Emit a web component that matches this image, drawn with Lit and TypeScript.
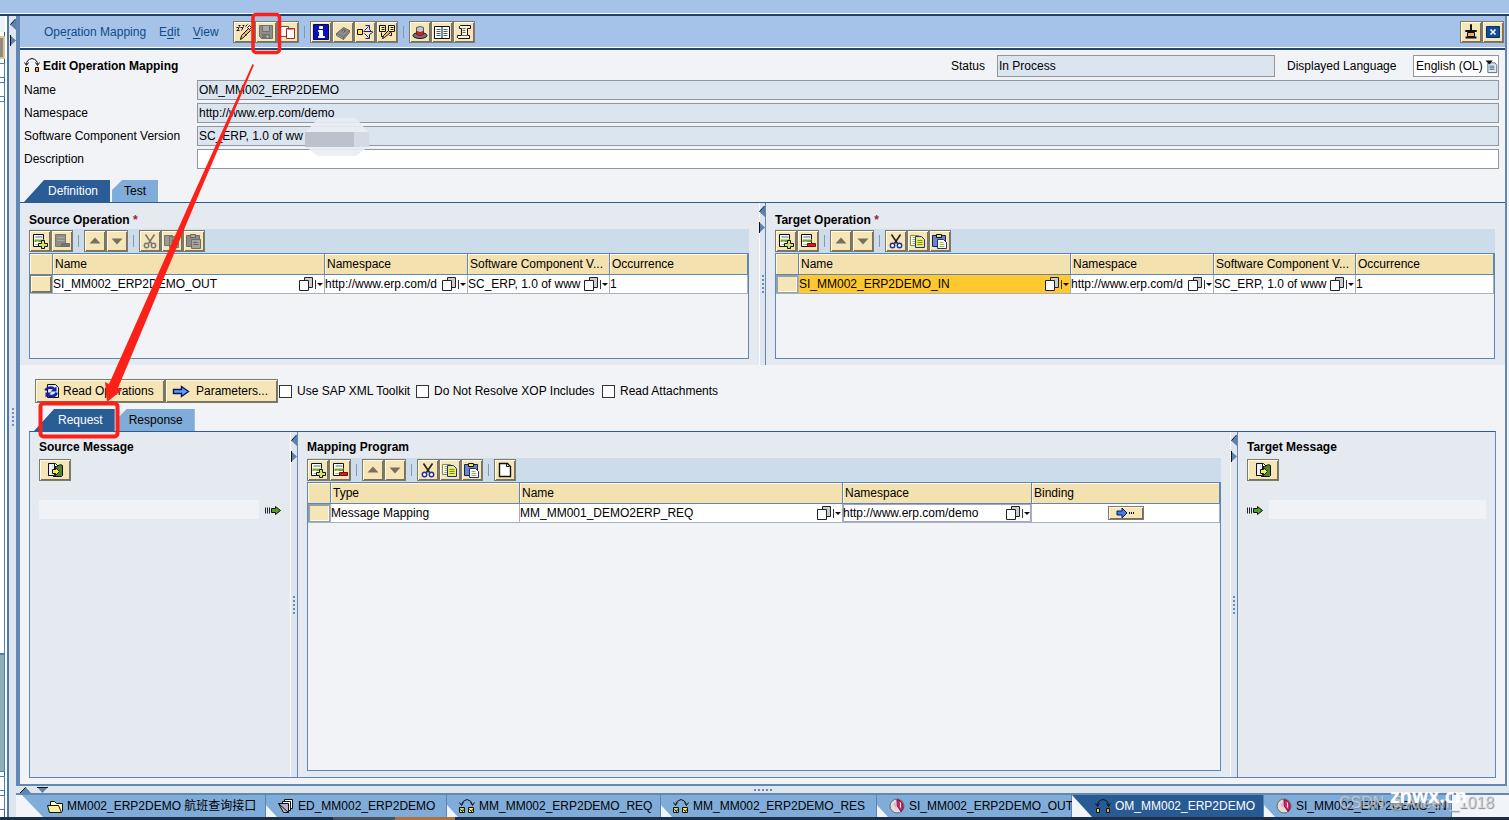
import { LitElement, html, css, svg, nothing } from "lit";
import { customElement, property, state } from "lit/decorators.js";
import { classMap } from "lit/directives/class-map.js";

/* ---------- icons, all drawn on a 16 x 16 grid ---------- */
const list = svg`
  <path d="M1 1h10v12H1z" fill="#fff" stroke="#111"/>
  <path d="M3 3h7M3 4h7M3 11h4" stroke="#9db4c8"/><path d="M2 7h9M2 8h9" stroke="#7da035"/><path d="M2 6h9M4 8h2" stroke="#c9d86a"/>`;

const ICONS: Record<string, unknown> = {
  edit: svg`<path d="M0 3h2M2 1h2M4 3h2M6 1h2M1 6l2-4M5 6l2-4M0 6h3M9 2l2-2" fill="none" stroke="#111"/>
    <path d="M12 4l2 2-7 7-3 2 1-4z" fill="#f2c04a" stroke="#111"/><path d="M11 3l2-2 2 2-2 2z" fill="#fff" stroke="#111"/><path d="M8 9l2 2" stroke="#c23a22"/>`,
  save: svg`<path d="M1 1h13v13H3l-2-2z" fill="#8f8f8c" stroke="#6f6f6d"/><path d="M4 1h7v6H4z" fill="#a9a9a6" stroke="#6f6f6d"/><path d="M4 10h7v4H4z" fill="#777" stroke="#6f6f6d"/><path d="M9 11v2" stroke="#c4c4c0" stroke-width="2"/>`,
  copyobj: svg`<path d="M0 2h8v10H0z" fill="#fff" stroke="#555"/><path d="M6 4h8v10H6z" fill="#fff" stroke="#b3271c"/><path d="M7 5h6" stroke="#d98a80"/>`,
  info: svg`<path d="M0 0h15v15H0z" fill="#0a12b8" stroke="#050a60"/><path d="M6 2h3v2H6zM5 6h4v6h2v1H5v-1h1V7H5z" fill="#fff" stroke="#fff"/>`,
  book: svg`<path d="M1 9l7-6 6 3-6 7z" fill="#8d8d89" stroke="#6a6a68"/><path d="M1 9l7 4v2l-7-4zM8 13l6-7v2l-6 7z" fill="#aaa" stroke="#6a6a68"/><path d="M6 7l2-2 2 1-2 2" fill="none" stroke="#555"/>`,
  tree: svg`<path d="M0 5h5v5H0z" fill="#f6ea4e" stroke="#111"/><path d="M6 7h9M12 5l3 3-3 2M7 6l4-4M8 1h4v4M7 9l4 4M12 10v4H8" fill="none" stroke="#13208f"/>`,
  tools: svg`<path d="M0 1h6v6H0zM9 1h6v6H9z" fill="#fff9a0" stroke="#111"/><path d="M2 3h3M2 5h3M11 3h3M11 5h3M2 8v4h2M12 8v3h-2" stroke="#111" fill="none"/><path d="M9 6l2 2-6 5-2 1 1-3z" fill="#f2c04a" stroke="#111"/>`,
  hat: svg`<ellipse cx="7.500" cy="11" rx="7" ry="3" fill="#6c7484" stroke="#111"/><path d="M4 10V3q4-2 7 0v7q-4 2-7 0z" fill="#c3c9d4" stroke="#555"/><path d="M4 7q4 2 7 0v3q-4 2-7 0z" fill="#d8232a" stroke="#8d1418"/>`,
  book2: svg`<path d="M0 2h15v12H0z" fill="#fff" stroke="#111"/><path d="M7.500 2v12" stroke="#111"/><path d="M2 5h4M2 7h4M2 9h4M2 11h4M9 5h4M9 7h4M9 9h4M9 11h4" stroke="#3a5f9b"/>`,
  scroll: svg`<path d="M4 1h10v3h-3v7h2v3H2q-2-1-1-3h4V4H3q-1-2 1-3z" fill="#fff6d8" stroke="#111"/><path d="M6 4h3M6 6h3M6 8h3M5 11h6" stroke="#666"/>`,
  pin: svg`<path d="M7 0h1v6H7z" fill="#fff" stroke="#111"/><path d="M2 6h11v1H2z" fill="#fff" stroke="#111"/><path d="M4 8h7v4H4z" fill="#f0a95e" stroke="#111"/><path d="M2 13h11" stroke="#111" stroke-width="2"/>`,
  close: svg`<path d="M1 2h13v11H1z" fill="#0f4c97" stroke="#0a2f6b"/><path d="M5 5l5 5M10 5l-5 5" stroke="#fff" stroke-width="1.600"/>`,
  add: svg`${list}<path d="M9 7h3v3h3v3h-3v2H9v-2H6v-3h3z" fill="#cfe56b" stroke="#111"/>`,
  remove: svg`${list}<path d="M7 10h8v3H7z" fill="#e01b12" stroke="#7a0d08"/>`,
  removeoff: svg`<path d="M1 1h10v12H1z" fill="#8f8f88" stroke="#77776f"/><path d="M3 4h7M3 7h7" stroke="#aaa"/><path d="M7 10h8v3H7z" fill="#777" stroke="#6c6c66"/>`,
  up: svg`<path d="M2 10h11L7.500 4z" fill="#77705f"/>`,
  down: svg`<path d="M2 5h11l-5.500 6z" fill="#77705f"/>`,
  cut: svg`<path d="M3 1l6 9M12 1L6 10" stroke="#222" stroke-width="1.600"/><circle cx="4" cy="12" r="2.200" fill="#fff" stroke="#1b2aa5" stroke-width="1.400"/><circle cx="11" cy="12" r="2.200" fill="#fff" stroke="#1b2aa5" stroke-width="1.400"/>`,
  cutoff: svg`<path d="M3 1l6 9M12 1L6 10" stroke="#777" stroke-width="1.600"/><circle cx="4" cy="12" r="2.200" fill="none" stroke="#777" stroke-width="1.400"/><circle cx="11" cy="12" r="2.200" fill="none" stroke="#777" stroke-width="1.400"/>`,
  copy: svg`<path d="M0 2h8v10H0z" fill="#fff" stroke="#8a8a50"/><path d="M2 4h3M2 6h3M2 8h3M2 10h3" stroke="#9bb32e"/><path d="M5 3h6l3 3v8H5z" fill="#e7ee6a" stroke="#1b2aa5"/><path d="M7 7h5M7 9h5M7 11h5" stroke="#7d8a1e"/>`,
  copyoff: svg`<path d="M0 2h8v10H0zM5 3h9v11H5z" fill="#9c9a90" stroke="#77756c"/><path d="M7 7h5M7 9h5M7 11h5" stroke="#6c6a62"/>`,
  paste: svg`<path d="M0 2h13v11H0z" fill="#6e86b8" stroke="#16225e"/><path d="M4 1h5v3H4z" fill="#f5ec3f" stroke="#111"/><path d="M5 6h6l3 3v6H5z" fill="#fff" stroke="#1b2aa5"/><path d="M7 9h4M7 11h5M7 13h5" stroke="#9bb32e"/>`,
  pasteoff: svg`<path d="M0 2h13v11H0z" fill="#8d8b82" stroke="#6f6d66"/><path d="M4 1h5v3H4z" fill="#aaa" stroke="#666"/><path d="M5 6h9v9H5z" fill="#a5a39a" stroke="#6f6d66"/><path d="M7 9h4M7 11h5" stroke="#666"/>`,
  page: svg`<path d="M2 1h8l3 3v10H2z" fill="#fff" stroke="#111" stroke-width="1.400"/><path d="M9 1v3h3" fill="none" stroke="#111"/>`,
  refresh: svg`<path d="M4 1h8l3 3v10H4z" fill="#dce9f7" stroke="#111"/><path d="M2 7a5 4 0 019-1M13 9a5 4 0 01-9 2" fill="none" stroke="#1620a0" stroke-width="2.600"/><path d="M13 3v5H7zM2 14V9h6z" fill="#1620a0"/>`,
  arrow: svg`<path d="M0 6h8V3l7 5-7 5v-3H0z" fill="#58a4ea" stroke="#0a1270" stroke-width="1.400"/>`,
  open: svg`<path d="M1 1h7l3 3v9H1z" fill="#f5f8fb" stroke="#111"/><path d="M9 4l4-2 2 1v10l-1 1H6V4z" fill="#4f8a1c" stroke="#111"/><path d="M1 1h6v12H1z" fill="#e8eff6" stroke="#111"/><path d="M5 7h3V5l4 4-4 4v-2H5z" fill="#f7ee3c" stroke="#111"/>`,
  flow: svg`<path d="M0 5v6M2 5v6M4 5v6" stroke="#222"/><path d="M6 6h4V4l5 4-5 4v-2H6z" fill="#4fa022" stroke="#111"/>`,
  op: svg`<path d="M2 7q0-5 5.500-6 5.500 1 5.500 6M0 5l2 3 2-3M11 5l2 3 2-3" fill="none" stroke="#111"/><path d="M1 10h3v4H1z" fill="#e6dc7a" stroke="#111"/><path d="M11 10h3v4h-3z" fill="#f2a445" stroke="#111"/>`,
  mm: svg`<path d="M2 6q1-4 5.500-5 4.500 1 5.500 5M0 4l2 3 2-3M11 4l2 3 2-3" fill="none" stroke="#111"/><path d="M0 9h5v5H0z" fill="#bcd873" stroke="#111"/><path d="M9 9h5v5H9z" fill="#f4ee32" stroke="#111"/><path d="M1 11l2 2 1-2M10 11l2 2 1-2" fill="none" stroke="#111"/>`,
  folder: svg`<path d="M3 13V3h4l2 2h6v8" fill="#fff8c0" stroke="#111"/><path d="M0 7h11l3 7H2z" fill="#fdf09a" stroke="#111"/>`,
  doc: svg`<path d="M6 1h8v9H6z" fill="#fff" stroke="#111"/><path d="M4 3h8v9H4z" fill="#fff" stroke="#111"/><path d="M0 5h10v9H5z" fill="#b4b0c6" stroke="#111"/><path d="M0 5l10 9" stroke="#111"/>`,
  si: svg`<circle cx="7.500" cy="7.500" r="7" fill="#ddd" stroke="#666"/><path d="M7.500 1a7 7 0 014 12l-4-6z" fill="#d62a6a" stroke="#7a1038"/><path d="M7 3L4 6l3 4z" fill="#f5a3c0"/><path d="M11 4v5" stroke="#fff"/>`,
  drop: svg`<path d="M3 3h9l2 3v9H3z" fill="#dfeaf2" stroke="#36566e"/><path d="M5 7h6M5 9h6M5 11h6" stroke="#36566e"/><path d="M0 0h9L5 5z" fill="#111"/>`,
};

const icon = (name: string, size = 16) => html`<svg
  width=${size}
  height=${size}
  viewBox="-0.5 -0.5 16 16"
  fill="none"
  overflow="visible"
  aria-hidden="true"
>
  ${ICONS[name]}
</svg>`;

const base = css`
  * {
    box-sizing: border-box;
  }
  :host {
    font: 12px/18px "Liberation Sans", Arial, "Noto Sans CJK SC", sans-serif;
    color: #000;
  }
  svg {
    display: block;
    flex: none;
  }
  button,
  input,
  select {
    font: inherit;
    color: inherit;
    margin: 0;
    padding: 0;
    border: 0;
    background: none;
    border-radius: 0;
    outline: 0;
  }
  .btn {
    display: inline-flex;
    align-items: center;
    justify-content: center;
    background: #f5e5b7;
    border: 1px solid #7d7a6c;
    box-shadow:
      inset 1px 1px #fffbe6,
      inset -1px -1px #77715d;
  }
`;

/* ---------- a row of square tool buttons; "|" starts a new group ---------- */
@customElement("tool-strip")
export class ToolStrip extends LitElement {
  @property() items = "";
  static styles = [
    base,
    css`
      :host {
        display: flex;
        align-items: center;
      }
      .btn {
        width: 22px;
        height: 22px;
      }
      .sep {
        width: 1px;
        height: 12px;
        margin: 0 5px;
        background: #8898a8;
      }
    `,
  ];
  render() {
    return this.items
      .split(" ")
      .map((n) =>
        n === "|"
          ? html`<span class="sep"></span>`
          : html`<button class="btn" aria-label=${n} ?disabled=${n.endsWith("off") || n === "save"}>${icon(n)}</button>`
      );
  }
}

@customElement("pane-divider")
export class PaneDivider extends LitElement {
  static styles = [
    base,
    css`
      :host {
        display: flex;
        flex-direction: column;
        align-items: center;
        justify-content: center;
        position: relative;
        background: #e0e5ed;
        border-left: 1px solid #fbfcfe;
        border-right: 1px solid #5f87b3;
      }
      .arrows {
        position: absolute;
        top: 3px;
        right: 0;
      }
      .dots {
        width: 2px;
        height: 18px;
        background: repeating-linear-gradient(#6d8fb8 0 2px, transparent 2px 4px);
      }
    `,
  ];
  render() {
    return html`<svg class="arrows" width="6" height="28" viewBox="0 0 6 28">
        <path d="M6 0v11L0 5.500z" fill="#5b82aa" /><path d="M5.500 0L.5 5.500" stroke="#111" />
        <path d="M0 16v11l6-5.500z" fill="#5b82aa" /><path d="M.5 16v11" stroke="#111" />
      </svg>
      <span class="dots"></span>`;
  }
}

interface Column {
  label: string;
  width?: number;
}
interface Cell {
  text?: string;
  kind?: "pick" | "plain" | "button";
  tone?: "hot" | "focus";
}

/* ---------- data grid ---------- */
@customElement("data-grid")
export class DataGrid extends LitElement {
  @property({ attribute: false }) columns: Column[] = [];
  @property({ attribute: false }) row: Cell[] = [];
  @property({ type: Boolean }) pressed = false;
  static styles = [
    base,
    css`
      :host {
        display: block;
        background: #f1f3f7;
        border: 1px solid #5f87b3;
      }
      table {
        width: 100%;
        table-layout: fixed;
        border-collapse: separate;
        border-spacing: 0;
      }
      col.sel {
        width: 23px;
      }
      th {
        height: 21px;
        padding: 0 2px;
        white-space: nowrap;
        text-align: left;
        font-weight: normal;
        line-height: 18px;
        background: #f3e1b0;
        border-right: 1px solid #5f87b3;
        border-bottom: 1px solid #5f87b3;
        box-shadow: inset 1px 1px #fdf7e2;
      }
      td {
        height: 19px;
        padding: 0;
        background: #fff;
        border-right: 1px solid #a9b1bb;
        border-bottom: 1px solid #a9b1bb;
      }
      td.hot {
        background: #ffc82f;
      }
      td.focus {
        box-shadow: inset 0 0 0 1px #a3a3cf;
      }
      .cell {
        display: flex;
        align-items: center;
        justify-content: center;
        height: 18px;
      }
      input {
        flex: 1;
        min-width: 0;
        height: 18px;
        padding: 0 1px 0 0;
      }
      .pick {
        width: 25px;
        height: 16px;
      }
      .rowsel {
        display: block;
        width: 100%;
        height: 18px;
      }
      .rowsel.in {
        border-color: #8fa0b0;
        box-shadow:
          inset 1px 1px #8fa0b0,
          inset -1px -1px #fffbe6;
      }
      .detail {
        width: 36px;
        height: 14px;
      }
    `,
  ];
  private cell(c: Cell, i: number) {
    if (c.kind === "button")
      return html`<button class="btn detail" aria-label="Binding">
        <svg width="20" height="12" viewBox="0 0 20 12">
          <path d="M1 4h5V1l5 5-5 5V8H1z" fill="#3f7fe0" stroke="#0a1270" />
          <path d="M13 6h1M15 6h1M17 6h1" stroke="#111" stroke-width="2" />
        </svg>
      </button>`;
    return html`<input aria-label=${this.columns[i].label} .value=${c.text ?? ""} />${c.kind === "pick"
        ? html`<button class="pick" aria-label="Search">
            <svg width="24" height="15" viewBox="0 0 24 15">
              <path d="M5.500.5h8v10h-8z" fill="#c9ced6" stroke="#222" />
              <path d="M.5 3.500h9v10h-9z" fill="#fff" stroke="#222" />
              <path d="M16.500 3v9" stroke="#333" /><path d="M18 6h6l-3 3z" fill="#111" />
            </svg>
          </button>`
        : nothing}`;
  }
  render() {
    return html`<table>
      <colgroup>
        <col class="sel" />
        ${this.columns.map((c) => html`<col width=${c.width ?? nothing} />`)}
      </colgroup>
      <thead>
        <tr>
          <th></th>
          ${this.columns.map((c) => html`<th scope="col">${c.label}</th>`)}
        </tr>
      </thead>
      <tbody>
        <tr>
          <td><button class=${classMap({ btn: true, rowsel: true, in: this.pressed })} aria-label="Row"></button></td>
          ${this.row.map((c, i) => html`<td class=${c.tone ?? ""}><div class="cell">${this.cell(c, i)}</div></td>`)}
        </tr>
      </tbody>
    </table>`;
  }
}

const OPERATION_COLUMNS: Column[] = [
  { label: "Name" },
  { label: "Namespace", width: 143 },
  { label: "Software Component V...", width: 142 },
  { label: "Occurrence", width: 138 },
];
const operationRow = (name: string, hot = false): Cell[] => [
  { text: name, kind: "pick", tone: hot ? "hot" : undefined },
  { text: "http://www.erp.com/d", kind: "pick" },
  { text: "SC_ERP, 1.0 of www", kind: "pick" },
  { text: "1" },
];
const MAPPING_COLUMNS: Column[] = [
  { label: "Type", width: 189 },
  { label: "Name" },
  { label: "Namespace", width: 189 },
  { label: "Binding", width: 188 },
];
const MAPPING_ROW: Cell[] = [
  { text: "Message Mapping" },
  { text: "MM_MM001_DEMO2ERP_REQ", kind: "pick" },
  { text: "http://www.erp.com/demo", kind: "pick", tone: "focus" },
  { kind: "button" },
];

const OBJECT_TABS = [
  { icon: "folder", label: "MM002_ERP2DEMO 航班查询接口", width: 244 },
  { icon: "doc", label: "ED_MM002_ERP2DEMO", width: 181 },
  { icon: "mm", label: "MM_MM002_ERP2DEMO_REQ", width: 214 },
  { icon: "mm", label: "MM_MM002_ERP2DEMO_RES", width: 216 },
  { icon: "si", label: "SI_MM002_ERP2DEMO_OUT", width: 195 },
  { icon: "op", label: "OM_MM002_ERP2DEMO", width: 192 },
  { icon: "si", label: "SI_MM002_ERP2DEMO_IN", width: 188 },
];

@customElement("app-root")
export class AppRoot extends LitElement {
  @state() private active = 5;

  static styles = [
    base,
    css`
      :host {
        display: flex;
        flex-direction: column;
        position: relative;
        min-height: 100vh;
        overflow: hidden;
        background: #f1f3f7;
      }
      .topbar {
        height: 16px;
        background: #a5c3e8;
        border-bottom: 2px solid #1f4364;
        box-shadow: inset 0 -1px #fff;
      }
      .desk {
        flex: 1;
        display: flex;
        min-height: 0;
      }
      .side {
        display: flex;
        flex-direction: column;
        gap: 4px;
        width: 9px;
        padding-right: 4px;
        background: linear-gradient(90deg, #fff 0 4px, #2f6297 4px 5px, #fff 5px 7px, #4b7aab 7px 9px);
      }
      .side i {
        border: 1px solid #4f7fb2;
        border-left: 0;
        background: #fff;
        height: 15px;
      }
      .side .gap {
        height: 16px;
        border: 0;
        background: #eef1f6;
      }
      .side .tool {
        height: 23px;
        background: #8f8b80;
        border: 2px solid #d9c793;
        border-left: 0;
      }
      .side .list {
        flex: 1;
        margin-bottom: -4px;
      }
      .side .teal {
        height: 118px;
        background: #8db0b8;
      }
      .side .last {
        margin-bottom: 7px;
      }
      .outer {
        width: 7px;
        border: 0;
        background: #dfe5ee;
      }
      .editor {
        flex: 1;
        min-width: 0;
        display: flex;
        flex-direction: column;
      }
      .frame {
        flex: 1;
        display: flex;
        flex-direction: column;
        border: solid #6288b6;
        border-width: 0 2px 2px 4px;
        margin-right: 2px;
      }
      .menubar {
        display: flex;
        align-items: center;
        height: 34px;
        padding: 0 1px 0 24px;
        background: #a5c3e8;
        border-bottom: 2px solid #26496b;
        box-shadow: inset 0 -1px #fff;
      }
      .menus {
        display: flex;
        width: 189px;
        gap: 13px;
        color: #0d4c8c;
      }
      .menus u {
        text-underline-offset: 2px;
      }
      .grow {
        flex: 1;
      }
      .form {
        display: grid;
        gap: 3px;
        padding: 5px 6px 11px 4px;
      }
      .line {
        display: flex;
        align-items: center;
        height: 20px;
      }
      .line.head {
        height: 22px;
        gap: 12px;
      }
      .head h1 {
        display: flex;
        flex: 1;
        gap: 3px;
        margin: 0;
        font-size: 12px;
        line-height: 18px;
        font-weight: bold;
      }
      .line > label.cap {
        width: 173px;
      }
      .lang {
        width: 114px;
      }
      .field {
        flex: 1;
        min-width: 0;
        height: 20px;
        padding: 0 1px;
        border: 1px solid #90979f;
        background: #fff;
      }
      .field.ro {
        background: #dbe5f0;
      }
      .head .field {
        flex: none;
        width: 278px;
        height: 22px;
      }
      .picklist {
        display: grid;
        align-items: center;
        width: 86px;
        height: 22px;
        border: 1px solid #90979f;
        background: #fff;
      }
      .picklist > * {
        grid-area: 1 / 1;
      }
      .picklist select {
        appearance: none;
        height: 20px;
        padding-left: 2px;
      }
      .picklist svg {
        justify-self: end;
        pointer-events: none;
      }
      .tabs {
        display: flex;
        gap: 2px;
        height: 22px;
        padding-left: 4px;
      }
      .tabs.low {
        padding-left: 14px;
      }
      .tab {
        height: 22px;
        padding: 0 12px 0 24px;
        background: #2a5d96;
        color: #fff;
        clip-path: polygon(20px 0, 100% 0, 100% 100%, 0 100%);
      }
      .tab.off {
        padding-left: 12px;
        background: #80acd9;
        color: #000;
        clip-path: polygon(10px 0, 100% 0, 100% 100%, 0 100%, 0 10px);
      }
      .split {
        display: grid;
        grid-template-columns: 1fr 7px 1fr;
        border-top: 1px solid #2a5d92;
        background: #e5e9f0;
      }
      .pane {
        display: flex;
        flex-direction: column;
        min-width: 0;
        padding: 8px 9px 6px;
      }
      .split .pane {
        padding-right: 10px;
      }
      h2 {
        margin: 0;
        font-size: 12px;
        line-height: 18px;
        font-weight: bold;
      }
      .messages .pane {
        padding-top: 6px;
      }
      .messages h2 {
        padding-bottom: 2px;
      }
      .req {
        color: #a01d3d;
      }
      .band {
        height: 24px;
        padding-top: 1px;
        background: #ccdceb;
      }
      .split data-grid {
        min-height: 106px;
      }
      .pane data-grid {
        flex: 1;
      }
      .actions {
        display: flex;
        align-items: center;
        padding: 14px 15px 6px;
      }
      .wide {
        height: 24px;
        padding: 0 7px;
        justify-content: flex-start;
      }
      .wide.read {
        width: 130px;
        gap: 4px;
      }
      .wide.params {
        width: 113px;
        gap: 7px;
      }
      .checks {
        display: grid;
        grid-template-columns: 137px 186px auto;
        padding-left: 1px;
      }
      .checks label {
        display: flex;
        align-items: center;
        gap: 5px;
      }
      .checks input {
        appearance: none;
        width: 13px;
        height: 13px;
        background: #fff;
        border: 1px solid #333;
      }
      .messages {
        flex: 1;
        display: grid;
        grid-template-columns: 260px 8px 1fr 8px 257px;
        margin: 0 9px 6px;
        background: #e5e9f0;
        border: 1px solid #5f87b3;
        border-top-color: #2a5d92;
      }
      .open {
        align-self: flex-start;
        width: 32px;
        height: 22px;
        margin-top: 1px;
      }
      .slot {
        display: flex;
        align-items: center;
        gap: 6px;
        margin-top: 19px;
      }
      .slot input {
        flex: 1;
        min-width: 0;
        height: 19px;
        background: #f0f2f6;
      }
      .gutter {
        display: flex;
        align-items: center;
        justify-content: center;
        position: relative;
        height: 9px;
        background: #dfe7ec;
        border-bottom: 2px solid #6288b6;
      }
      .gutter svg {
        position: absolute;
        left: 4px;
        bottom: 0;
      }
      .gutter .dots {
        width: 18px;
        height: 2px;
        background: repeating-linear-gradient(90deg, #6d86b0 0 2px, transparent 2px 4px);
      }
      .objects {
        display: flex;
        height: 22px;
        padding-left: 6px;
        background: #f1f4f9;
      }
      .object {
        display: flex;
        align-items: center;
        gap: 4px;
        flex: none;
        height: 22px;
        padding-left: 12px;
        white-space: nowrap;
        text-align: left;
        background: #80acd9;
        border-right: 1px solid #5c84b2;
        clip-path: polygon(0 0, 100% 0, 100% 100%, 11px 100%, 0 10px);
      }
      .object.first {
        padding-left: 25px;
        clip-path: polygon(0 0, 100% 0, 100% 100%, 21px 100%);
      }
      .object.on {
        padding-left: 23px;
        background: #285b94;
        color: #fff;
        clip-path: polygon(0 0, 100% 0, 100% 100%, 20px 100%);
      }
      .taskbar {
        height: 3px;
        background: linear-gradient(90deg, #1b3048 0 333px, #47545c 333px 395px, #b2703c 395px 455px, #1b3048 455px);
      }
      .notes {
        position: absolute;
        top: 0;
        left: 0;
        pointer-events: none;
      }
      .mark,
      .site {
        position: absolute;
        pointer-events: none;
        white-space: nowrap;
        line-height: 20px;
      }
      .mark {
        right: 15px;
        bottom: 7px;
        font-size: 16px;
        color: rgba(225, 229, 236, 0.6);
        text-shadow: 1px 1px 1px #888;
      }
      .site {
        right: 42px;
        bottom: 13px;
        font: bold 19px/22px "Open Sans", sans-serif;
        color: #fff;
      }
    `,
  ];

  private fieldRow(id: string, label: string, value: string, readonly = true) {
    return html`<div class="line">
      <label class="cap" for=${id}>${label}</label>
      <input id=${id} class=${classMap({ field: true, ro: readonly })} .value=${value} ?readonly=${readonly} />
    </div>`;
  }

  render() {
    return html`
      <div class="topbar"></div>
      <div class="desk">
        <aside class="side">
          <i class="gap"></i><i class="tool"></i><i></i><i></i><i class="list"></i><i class="teal"></i><i></i
          ><i class="last"></i>
        </aside>
        <pane-divider class="outer"></pane-divider>
        <main class="editor">
          <div class="frame">
            <nav class="menubar">
              <div class="menus">
                <button>Ope<u>r</u>ation Mapping</button>
                <button>E<u>d</u>it</button>
                <button><u>V</u>iew</button>
              </div>
              <tool-strip items="edit save copyobj | info book tree tools | hat book2 scroll"></tool-strip>
              <span class="grow"></span>
              <tool-strip items="pin close"></tool-strip>
            </nav>

            <section class="form">
              <div class="line head">
                <h1>${icon("op")}Edit Operation Mapping</h1>
                <label for="status">Status</label>
                <input id="status" class="field ro" readonly .value=${"In Process"} />
                <label class="lang" for="lang">Displayed Language</label>
                <div class="picklist">
                  <select id="lang">
                    <option>English (OL)</option>
                  </select>
                  ${icon("drop", 13)}
                </div>
              </div>
              ${this.fieldRow("name", "Name", "OM_MM002_ERP2DEMO")}
              ${this.fieldRow("ns", "Namespace", "http://www.erp.com/demo")}
              ${this.fieldRow("scv", "Software Component Version", "SC_ERP, 1.0 of ww")}
              ${this.fieldRow("desc", "Description", "", false)}
            </section>

            <div class="tabs">
              <button class="tab">Definition</button>
              <button class="tab off">Test</button>
            </div>
            <section class="split">
              <div class="pane">
                <h2>Source Operation <span class="req">*</span></h2>
                <div class="band">
                  <tool-strip items="add removeoff | up down | cutoff copyoff pasteoff"></tool-strip>
                </div>
                <data-grid .columns=${OPERATION_COLUMNS} .row=${operationRow("SI_MM002_ERP2DEMO_OUT")}></data-grid>
              </div>
              <pane-divider></pane-divider>
              <div class="pane">
                <h2>Target Operation <span class="req">*</span></h2>
                <div class="band"><tool-strip items="add remove | up down | cut copy paste"></tool-strip></div>
                <data-grid
                  pressed
                  .columns=${OPERATION_COLUMNS}
                  .row=${operationRow("SI_MM002_ERP2DEMO_IN", true)}
                ></data-grid>
              </div>
            </section>

            <div class="actions">
              <button class="btn wide read">${icon("refresh")}Read Operations</button>
              <button class="btn wide params">${icon("arrow")}Parameters...</button>
              <div class="checks">
                <label><input type="checkbox" />Use SAP XML Toolkit</label>
                <label><input type="checkbox" />Do Not Resolve XOP Includes</label>
                <label><input type="checkbox" />Read Attachments</label>
              </div>
            </div>

            <div class="tabs low">
              <button class="tab">Request</button>
              <button class="tab off">Response</button>
            </div>
            <section class="messages">
              <div class="pane">
                <h2>Source Message</h2>
                <button class="btn open" aria-label="Open source message">${icon("open")}</button>
                <div class="slot"><input aria-label="Source message" readonly />${icon("flow")}</div>
              </div>
              <pane-divider></pane-divider>
              <div class="pane">
                <h2>Mapping Program</h2>
                <div class="band"><tool-strip items="add remove | up down | cut copy paste | page"></tool-strip></div>
                <data-grid pressed .columns=${MAPPING_COLUMNS} .row=${MAPPING_ROW}></data-grid>
              </div>
              <pane-divider></pane-divider>
              <div class="pane">
                <h2>Target Message</h2>
                <button class="btn open" aria-label="Open target message">${icon("open")}</button>
                <div class="slot">${icon("flow")}<input aria-label="Target message" readonly /></div>
              </div>
            </section>
          </div>

          <div class="gutter">
            <svg width="28" height="6" viewBox="0 0 28 6">
              <path d="M0 6h11L5.500 0z" fill="#5b82aa" /><path d="M0 6L5.500.5" stroke="#111" />
              <path d="M17 0h11l-5.500 6z" fill="#5b82aa" /><path d="M17 .5h11" stroke="#111" />
            </svg>
            <span class="dots"></span>
          </div>
          <nav class="objects">
            ${OBJECT_TABS.map(
              (t, i) => html`<button
                class=${classMap({ object: true, first: i === 0, on: i === this.active })}
                style="width:${t.width}px"
                @click=${() => (this.active = i)}
              >
                ${icon(t.icon)}${t.label}
              </button>`
            )}
          </nav>
        </main>
      </div>
      <div class="taskbar"></div>

      <svg class="notes" width="460" height="460" viewBox="0 0 460 460">
        <path d="M318 118h38l12 14v15l-12 9h-38l-12-9v-15z" fill="#e9edf3" opacity=".9" />
        <path d="M305 132h49v15h-49z" fill="#bcc1cc" />
        <path d="M354 132h15v15h-15z" fill="#d3dae5" />
        <rect x="253" y="14.500" width="26.500" height="38" rx="3" fill="none" stroke="#fb2118" stroke-width="3.500" />
        <rect x="40.500" y="403.500" width="77" height="33" rx="3" fill="none" stroke="#fb2118" stroke-width="4" />
        <path d="M252.500 64L191 200 109 384l-4-2 2 20 15-12-4-2L196 201 254 65z" fill="#fb2118" />
      </svg>
      <span class="mark">CSDN @Aileen_1018</span>
      <span class="site">znwx.cn</span>
    `;
  }
}
